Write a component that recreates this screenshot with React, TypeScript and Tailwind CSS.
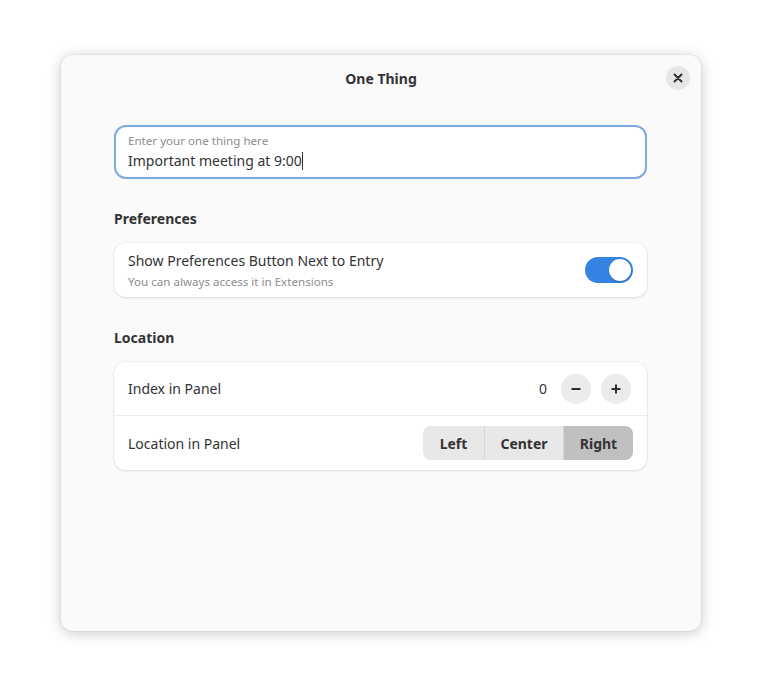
import React, { useState } from 'react';

export default function App() {
  const [show, setShow] = useState(true);
  const [index, setIndex] = useState(0);
  const [loc, setLoc] = useState('Right');

  return (
    <div
      className="w-[762px] h-[698px] bg-white pt-[55px] pl-[61px] text-[#2e2e2e]"
      style={{ fontFamily: '"Noto Sans", "Open Sans", sans-serif' }}
    >
      <div className="w-[640px] h-[576px] rounded-[12px] bg-[#fafafa] shadow-[0_2px_14px_rgba(0,0,0,0.22),0_0_0_1px_rgba(0,0,0,0.04)] flex flex-col">
        {/* header */}
        <div className="h-[46px] flex items-center justify-center relative">
          <span className="text-[14px] font-bold text-[#333]">One Thing</span>
          <button className="absolute right-[11px] top-[11px] w-[24px] h-[24px] rounded-full bg-[#e6e6e6] flex items-center justify-center">
            <svg width="10" height="10" viewBox="0 0 10 10">
              <path d="M1.5 1.5 L8.5 8.5 M8.5 1.5 L1.5 8.5" stroke="#2e2e2e" strokeWidth="2" strokeLinecap="round" />
            </svg>
          </button>
        </div>

        <div className="w-[533px] ml-[53px] mt-[24px] flex flex-col">
          {/* entry */}
          <div className="h-[54px] rounded-[12px] border-2 border-[#7ea9e1] bg-white px-[12px] flex flex-col justify-center">
            <span className="text-[11.6px] leading-[16px] text-[#8d8d8d]">Enter your one thing here</span>
            <span className="mt-[2px] text-[14px] leading-[20px] text-[#333] flex items-center">
              Important meeting at 9:00
              <span className="inline-block w-[1px] h-[18px] bg-[#333]" />
            </span>
          </div>

          {/* preferences */}
          <h2 className="mt-[30px] text-[14px] font-bold leading-[20px] text-[#333]">Preferences</h2>
          <div className="mt-[14px] h-[54px] rounded-[12px] bg-white shadow-[0_0_0_1px_rgba(0,0,0,0.03),0_1px_3px_rgba(0,0,0,0.1)] flex items-center justify-between px-[14px]">
            <div className="flex flex-col">
              <span className="text-[14px] leading-[20px] text-[#333]">Show Preferences Button Next to Entry</span>
              <span className="text-[11.6px] leading-[16px] text-[#8d8d8d] mt-[3px]">You can always access it in Extensions</span>
            </div>
            <button
              onClick={() => setShow(!show)}
              className={`w-[48px] h-[26px] rounded-full flex items-center px-[2px] ${show ? 'bg-[#3584e4] justify-end' : 'bg-[#d6d6d6] justify-start'}`}
            >
              <span className="w-[22px] h-[22px] rounded-full bg-white shadow-[0_1px_2px_rgba(0,0,0,0.25)]" />
            </button>
          </div>

          {/* location */}
          <h2 className="mt-[31px] text-[14px] font-bold leading-[20px] text-[#333]">Location</h2>
          <div className="mt-[14px] rounded-[12px] bg-white shadow-[0_0_0_1px_rgba(0,0,0,0.03),0_1px_3px_rgba(0,0,0,0.1)] flex flex-col">
            <div className="h-[54px] flex items-center justify-between pl-[14px] pr-[16px] border-b border-[#ebebeb]">
              <span className="text-[14px] text-[#333]">Index in Panel</span>
              <div className="flex items-center">
                <span className="text-[14px] text-[#333] mr-[14px]">{index}</span>
                <button
                  onClick={() => setIndex(index - 1)}
                  className="w-[30px] h-[30px] rounded-full bg-[#ebebeb] flex items-center justify-center"
                >
                  <svg width="12" height="12" viewBox="0 0 12 12">
                    <path d="M1.5 6 H10.5" stroke="#2e2e2e" strokeWidth="2" />
                  </svg>
                </button>
                <button
                  onClick={() => setIndex(index + 1)}
                  className="ml-[10px] w-[30px] h-[30px] rounded-full bg-[#ebebeb] flex items-center justify-center"
                >
                  <svg width="12" height="12" viewBox="0 0 12 12">
                    <path d="M1.5 6 H10.5 M6 1.5 V10.5" stroke="#2e2e2e" strokeWidth="2" />
                  </svg>
                </button>
              </div>
            </div>
            <div className="h-[54px] flex items-center justify-between pl-[14px] pr-[14px]">
              <span className="text-[14px] text-[#333]">Location in Panel</span>
              <div className="flex h-[34px] rounded-[8px] overflow-hidden">
                {['Left', 'Center', 'Right'].map((l, i) => (
                  <button
                    key={l}
                    onClick={() => setLoc(l)}
                    className={`h-full text-[14px] font-bold text-[#333] ${i > 0 ? 'border-l border-[#d5d5d5]' : ''} ${l === 'Left' ? 'w-[61px]' : l === 'Center' ? 'w-[79px]' : 'w-[70px]'} ${loc === l ? 'bg-[#c0c0c0]' : 'bg-[#e8e8e8]'}`}
                  >
                    {l}
                  </button>
                ))}
              </div>
            </div>
          </div>
        </div>
      </div>
    </div>
  );
}
